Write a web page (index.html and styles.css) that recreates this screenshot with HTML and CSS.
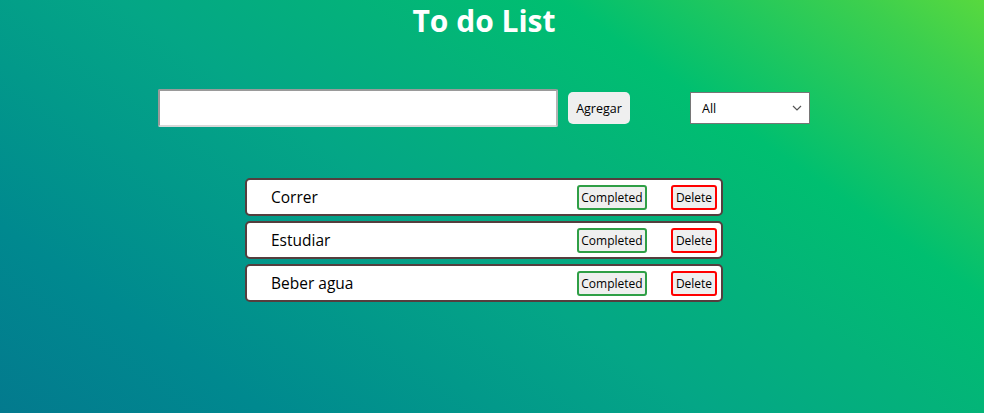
FILE: index.html
```html
<!DOCTYPE html>
<html lang="es">
<head>
<meta charset="utf-8">
<title>To do List</title>
<link rel="stylesheet" href="styles.css">
</head>
<body>
<div class="app">
  <h1 class="title">To do List</h1>
  <form class="todo-form">
    <input class="todo-input" type="text">
    <button class="add-btn" type="button">Agregar</button>
    <div class="filter">
      <span class="filter-label">All</span>
      <svg class="chevron" width="10" height="6" viewBox="0 0 10 6"><path d="M1 1 L5 5 L9 1" fill="none" stroke="#555" stroke-width="1.2"/></svg>
    </div>
  </form>
  <ul class="todo-list">
    <li class="todo-item">
      <span class="todo-text">Correr</span>
      <button class="btn-complete" type="button">Completed</button>
      <button class="btn-delete" type="button">Delete</button>
    </li>
    <li class="todo-item">
      <span class="todo-text">Estudiar</span>
      <button class="btn-complete" type="button">Completed</button>
      <button class="btn-delete" type="button">Delete</button>
    </li>
    <li class="todo-item">
      <span class="todo-text">Beber agua</span>
      <button class="btn-complete" type="button">Completed</button>
      <button class="btn-delete" type="button">Delete</button>
    </li>
  </ul>
</div>
</body>
</html>
```
FILE: styles.css
```css
html, body {
  margin: 0;
  padding: 0;
  height: 100%;
}

body {
  font-family: "Open Sans", "Noto Sans", sans-serif;
  background: linear-gradient(35deg, #037a8e 0%, #00898f 17%, #02998a 32%, #04a686 45%, #04b27a 60%, #00bf70 73%, #3ccf4e 92%, #58d93e 100%);
  min-height: 100%;
}

.app {
  width: 968px;
  display: flex;
  flex-direction: column;
  align-items: center;
}

.title {
  margin: 0;
  font-size: 30px;
  line-height: 42px;
  font-weight: 700;
  color: #ffffff;
  text-align: center;
}

.todo-form {
  margin-top: 47px;
  display: flex;
  align-items: center;
}

.todo-input {
  box-sizing: border-box;
  width: 400px;
  height: 38px;
  margin: 0 10px 0 0;
  border: 2px solid;
  border-color: #9a9a9a #b4b4b4 #d8d8d8 #9a9a9a;
  border-radius: 2px;
  background: #ffffff;
  outline: none;
}

.add-btn {
  box-sizing: border-box;
  width: 62px;
  height: 32px;
  margin: 0 60px 0 0;
  padding: 0;
  border: none;
  border-radius: 5px;
  background: #efefef;
  color: #000;
  font-family: "Open Sans", "Noto Sans", sans-serif;
  font-size: 12.5px;
}

.filter {
  box-sizing: border-box;
  width: 120px;
  height: 32px;
  border: 1px solid #767676;
  background: #ffffff;
  display: flex;
  align-items: center;
  justify-content: space-between;
  padding: 0 7px 0 11px;
}

.filter-label {
  font-size: 12.5px;
  color: #000;
}

.chevron {
  display: block;
}

.todo-list {
  list-style: none;
  margin: 51px 0 0 0;
  padding: 0;
  width: 478px;
  display: flex;
  flex-direction: column;
  gap: 5px;
}

.todo-item {
  box-sizing: border-box;
  height: 38px;
  border: 2px solid #553e3e;
  border-radius: 5px;
  background: #ffffff;
  display: flex;
  align-items: center;
  padding: 0 4px 0 24px;
}

.todo-text {
  flex: 1;
  font-size: 15.5px;
  color: #000;
}

.btn-complete,
.btn-delete {
  box-sizing: border-box;
  height: 25px;
  padding: 0;
  background: #efefef;
  color: #000;
  border-radius: 3px;
  font-family: "Open Sans", "Noto Sans", sans-serif;
  font-size: 12px;
}

.btn-complete {
  width: 70px;
  border: 2px solid #2f9f46;
  margin-right: 24px;
}

.btn-delete {
  width: 46px;
  border: 2px solid #ff0000;
}
```
